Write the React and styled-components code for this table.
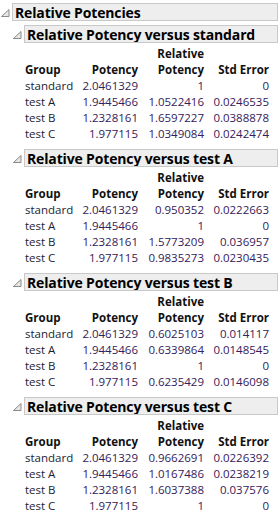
import React from "react";
import styled, { createGlobalStyle } from "styled-components";

const Global = createGlobalStyle`
  html, body { margin: 0; padding: 0; background: #ffffff; }
  body { font-family: "Open Sans", "Noto Sans", sans-serif; }
`;

const Page = styled.div`
  width: 278px;
  padding-top: 3px;
  box-sizing: border-box;
`;

const Node = styled.div`
  display: flex;
  flex-direction: column;
`;

const NodeHead = styled.div`
  display: flex;
  align-items: center;
  height: 18px;
  margin-left: ${(p) => p.$indent}px;
`;

const TriBox = styled.div`
  width: ${(p) => p.$w}px;
  height: 18px;
  display: flex;
  align-items: center;
  justify-content: flex-start;
  padding-left: 1px;
  padding-top: 2px;
  box-sizing: border-box;
`;

const TitleBox = styled.div`
  flex: 1;
  height: 18px;
  box-sizing: border-box;
  border: 1px solid #c9c9c9;
  background: #eeeeee;
  display: flex;
  align-items: center;
  padding-left: 2px;
  font-weight: 700;
  font-size: 14px;
  color: #000;
  white-space: nowrap;
  overflow: hidden;
  letter-spacing: -0.15px;
`;

const Children = styled.div`
  display: flex;
  flex-direction: column;
  gap: 7px;
  margin-top: 4px;
`;

const Table = styled.div`
  display: grid;
  grid-template-columns: 46px 67px 66px 65px;
  grid-auto-rows: 16px;
  margin: 3px 0 0 25px;
  font-size: 11.5px;
  line-height: 16px;
  white-space: nowrap;
`;

const Head = styled.div`
  font-weight: 700;
  color: #111;
  text-align: ${(p) => (p.$left ? "left" : "right")};
`;

const Label = styled.div`
  color: #1c1c30;
  text-align: left;
`;

const Num = styled.div`
  color: #34205a;
  text-align: right;
`;

const Tri = () => (
  <svg width="9" height="8" viewBox="0 0 9 8">
    <path d="M8 0.5 L8 7.5 L0.5 7.5 Z" fill="#e6e6e6" stroke="#8a8a8a" strokeWidth="1" strokeLinejoin="miter" />
  </svg>
);

const sections = [
  {
    ref: "standard",
    rows: [
      ["standard", "2.0461329", "1", "0"],
      ["test A", "1.9445466", "1.0522416", "0.0246535"],
      ["test B", "1.2328161", "1.6597227", "0.0388878"],
      ["test C", "1.977115", "1.0349084", "0.0242474"],
    ],
  },
  {
    ref: "test A",
    rows: [
      ["standard", "2.0461329", "0.950352", "0.0222663"],
      ["test A", "1.9445466", "1", "0"],
      ["test B", "1.2328161", "1.5773209", "0.036957"],
      ["test C", "1.977115", "0.9835273", "0.0230435"],
    ],
  },
  {
    ref: "test B",
    rows: [
      ["standard", "2.0461329", "0.6025103", "0.014117"],
      ["test A", "1.9445466", "0.6339864", "0.0148545"],
      ["test B", "1.2328161", "1", "0"],
      ["test C", "1.977115", "0.6235429", "0.0146098"],
    ],
  },
  {
    ref: "test C",
    rows: [
      ["standard", "2.0461329", "0.9662691", "0.0226392"],
      ["test A", "1.9445466", "1.0167486", "0.0238219"],
      ["test B", "1.2328161", "1.6037388", "0.037576"],
      ["test C", "1.977115", "1", "0"],
    ],
  },
];

const Section = ({ s }) => (
  <Node>
    <NodeHead $indent={12}>
      <TriBox $w={12}>
        <Tri />
      </TriBox>
      <TitleBox>Relative Potency versus {s.ref}</TitleBox>
    </NodeHead>
    <Table>
      <Head />
      <Head />
      <Head>Relative</Head>
      <Head />
      <Head $left>Group</Head>
      <Head>Potency</Head>
      <Head>Potency</Head>
      <Head>Std Error</Head>
      {s.rows.map((r) => (
        <React.Fragment key={r[0]}>
          <Label>{r[0]}</Label>
          <Num>{r[1]}</Num>
          <Num>{r[2]}</Num>
          <Num>{r[3]}</Num>
        </React.Fragment>
      ))}
    </Table>
  </Node>
);

export default function App() {
  return (
    <>
      <Global />
      <Page>
        <Node>
          <NodeHead $indent={0}>
            <TriBox $w={12}>
              <Tri />
            </TriBox>
            <TitleBox>Relative Potencies</TitleBox>
          </NodeHead>
          <Children>
            {sections.map((s) => (
              <Section key={s.ref} s={s} />
            ))}
          </Children>
        </Node>
      </Page>
    </>
  );
}
